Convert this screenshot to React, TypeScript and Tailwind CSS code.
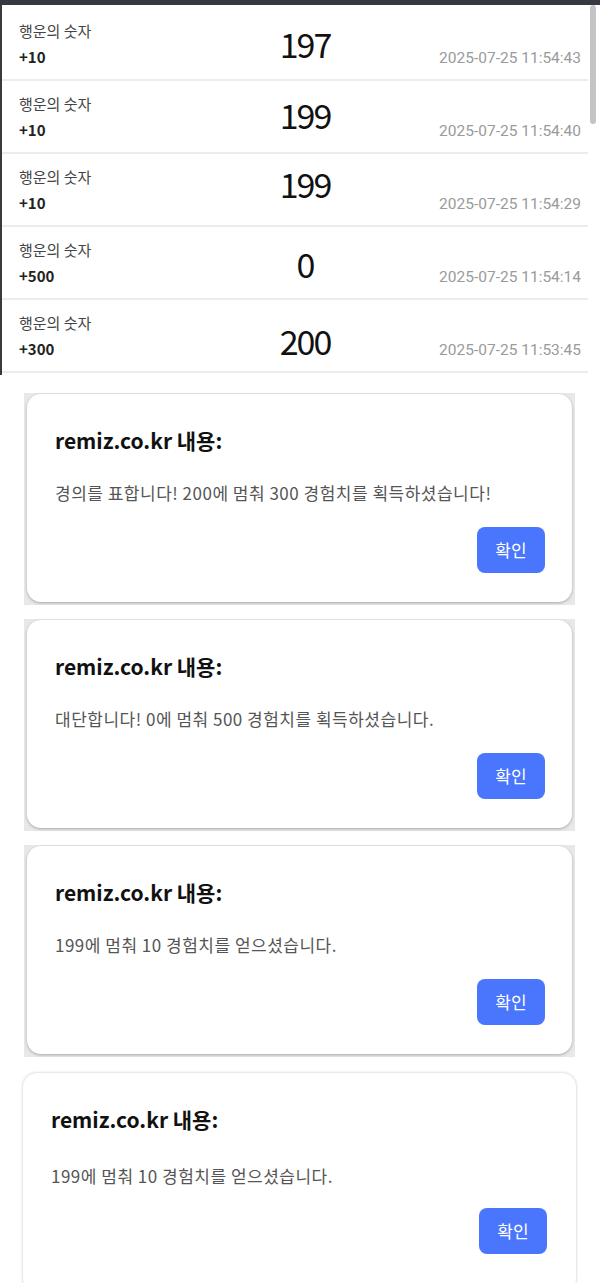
type LuckyRow = {
  label: string;
  exp: string;
  value: number;
  offset: number;
  at: string;
};

type AlertItem = {
  message: string;
  last?: boolean;
};

const rows: LuckyRow[] = [
  { label: '행운의 숫자', exp: '+10', value: 197, offset: 16, at: '2025-07-25 11:54:43' },
  { label: '행운의 숫자', exp: '+10', value: 199, offset: 14, at: '2025-07-25 11:54:40' },
  { label: '행운의 숫자', exp: '+10', value: 199, offset: 10, at: '2025-07-25 11:54:29' },
  { label: '행운의 숫자', exp: '+500', value: 0, offset: 17, at: '2025-07-25 11:54:14' },
  { label: '행운의 숫자', exp: '+300', value: 200, offset: 21, at: '2025-07-25 11:53:45' },
];

const alerts: AlertItem[] = [
  { message: '경의를 표합니다! 200에 멈춰 300 경험치를 획득하셨습니다!' },
  { message: '대단합니다! 0에 멈춰 500 경험치를 획득하셨습니다.' },
  { message: '199에 멈춰 10 경험치를 얻으셨습니다.' },
  { message: '199에 멈춰 10 경험치를 얻으셨습니다.', last: true },
];

function HistoryList() {
  return (
    <section className="flex h-[375px] border-t-[5px] border-[#343a40]">
      <div className="w-[588px] border-l-2 border-[#3a3a3a] pt-[3px]">
        {rows.map((row, idx) => (
          <div
            key={idx}
            className="grid h-[73px] grid-cols-[1fr_auto_1fr] border-b-2 border-[#ececec] pl-[17px] pr-[7px]"
          >
            <div className="pt-[13px]">
              <p className="text-[15px] leading-5 text-[#444]">{row.label}</p>
              <p className="mt-1.5 text-[15px] leading-5 font-semibold text-[#222]">{row.exp}</p>
            </div>
            <div className="w-[110px] pl-[10px] text-center">
              <p
                className="text-[34px] leading-10 tracking-[-2px] text-[#111]"
                style={{ marginTop: row.offset }}
              >
                {row.value}
              </p>
            </div>
            <div className="pt-[40px] text-right">
              <p className="font-['Roboto',sans-serif] text-[15.5px] leading-5 text-[#9a9a9a]">{row.at}</p>
            </div>
          </div>
        ))}
      </div>
      <div className="w-[12px] pl-[2px]">
        <div className="h-[119px] w-[6px] rounded-full bg-[#c4c4c4]" />
      </div>
    </section>
  );
}

function AlertCard({ message, last }: AlertItem) {
  const card = (
    <div
      className={
        last
          ? 'h-[220px] rounded-[14px] bg-white pl-[28px] pr-[29px] pt-[32px] shadow-[0_0_3px_rgba(0,0,0,0.25)]'
          : 'h-[208px] rounded-[14px] bg-white pl-[28px] pr-[27px] pt-[32px] shadow-[0_1px_3px_rgba(0,0,0,0.28)]'
      }
    >
      <h2 className="text-[21px] leading-7 font-bold text-[#111]">remiz.co.kr 내용:</h2>
      <p className={`${last ? 'mt-[31px]' : 'mt-[27px]'} text-[17px] leading-6 tracking-[0.5px] text-[#555]`}>
        {message}
      </p>
      <div className={`${last ? 'mt-[20px]' : 'mt-[22px]'} flex justify-end`}>
        <button className="h-[46px] w-[68px] rounded-[8px] bg-[#4a75fd] text-[17px] text-white">확인</button>
      </div>
    </div>
  );

  if (last) {
    return <div className="ml-[23px] mt-[16px] w-[553px]">{card}</div>;
  }

  return (
    <div className="ml-[24px] mt-[14px] w-[551px] bg-[#e8e8e8] px-[3px] pb-[3px] pt-[1px] first:mt-[18px]">
      {card}
    </div>
  );
}

export default function App() {
  return (
    <div className="h-[1283px] w-[600px] overflow-hidden bg-white font-['Noto_Sans_CJK_KR','Noto_Sans',sans-serif]">
      <HistoryList />
      <div>
        {alerts.map((a, idx) => (
          <AlertCard key={idx} message={a.message} last={a.last} />
        ))}
      </div>
    </div>
  );
}
